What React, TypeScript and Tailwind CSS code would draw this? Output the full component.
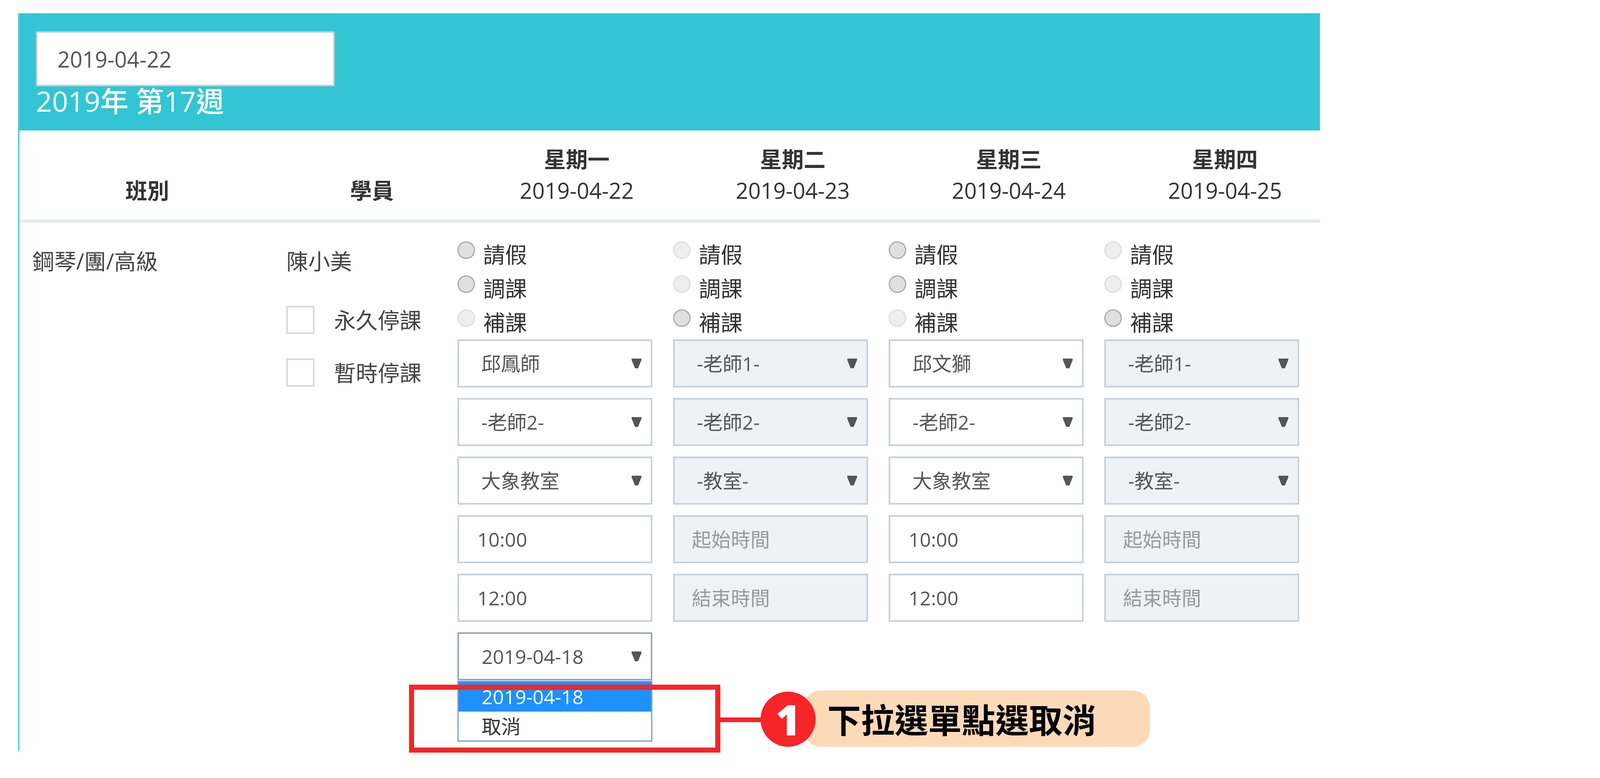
import React from "react";

type Col = {
  radios: boolean[];
  selects: string[];
  times: string[];
  disabled: boolean;
};

const cols: Col[] = [
  { radios: [true, true, false], selects: ["邱鳳師", "-老師2-", "大象教室"], times: ["10:00", "12:00"], disabled: false },
  { radios: [false, false, true], selects: ["-老師1-", "-老師2-", "-教室-"], times: ["起始時間", "結束時間"], disabled: true },
  { radios: [true, true, false], selects: ["邱文獅", "-老師2-", "大象教室"], times: ["10:00", "12:00"], disabled: false },
  { radios: [false, false, true], selects: ["-老師1-", "-老師2-", "-教室-"], times: ["起始時間", "結束時間"], disabled: true },
];

const days = [
  ["星期一", "2019-04-22"],
  ["星期二", "2019-04-23"],
  ["星期三", "2019-04-24"],
];

function Arrow() {
  return (
    <svg width="25" height="25" viewBox="0 0 25 25" className="shrink-0">
      <polygon points="0,0 25,0 25,4 16.5,25 8.5,25 0,4" fill="#555555" />
    </svg>
  );
}

function Radio({ dark }: { dark: boolean }) {
  return (
    <span
      className={
        dark
          ? "mt-[10px] h-[45px] w-[45px] shrink-0 rounded-full border-[3px] border-[#a9a9a9] bg-[#e0e0e0]"
          : "mt-[10px] h-[45px] w-[45px] shrink-0 rounded-full border-[3px] border-[#dddddd] bg-[#eeeeee]"
      }
    />
  );
}

function SelectBox({ text, disabled }: { text: string; disabled: boolean }) {
  return (
    <div
      className={
        disabled
          ? "flex h-[123px] w-[499px] items-center justify-between border-4 border-[#c6cedb] bg-[#eef1f6] pl-[57px] pr-[24px] text-[50px] text-[#555555]"
          : "flex h-[123px] w-[499px] items-center justify-between border-4 border-[#c6cedb] bg-white pl-[57px] pr-[24px] text-[50px] text-[#555555]"
      }
    >
      <span>{text}</span>
      <Arrow />
    </div>
  );
}

function TimeBox({ text, disabled }: { text: string; disabled: boolean }) {
  return (
    <div
      className={
        disabled
          ? "flex h-[123px] w-[499px] items-center border-4 border-[#c6cedb] bg-[#eef1f6] pl-[44px] text-[50px] text-[#999999]"
          : "flex h-[123px] w-[499px] items-center border-4 border-[#c6cedb] bg-white pl-[47px] text-[50px] text-[#555555]"
      }
    >
      {text}
    </div>
  );
}

export default function App() {
  return (
    <div className="relative h-[1992px] w-full overflow-hidden bg-white font-['Open_Sans','Noto_Sans_CJK_TC',sans-serif]">
      <div className="pl-[46px] pt-[34px]">
        <div className="h-[1888px] w-[3333px] border-l-4 border-[#5bcfdb]">
          {/* Header */}
          <div className="h-[300px] bg-[#33c5d3] pl-[42px] pt-[46px]">
            <div className="flex h-[141px] w-[765px] items-center border-4 border-[#c4ccd8] bg-white pl-[51px] text-[56px] text-[#555555]">
              2019-04-22
            </div>
            <div className="-mt-[2px] text-[72px] font-medium leading-[79px] text-white">2019年 第17週</div>
          </div>

          {/* Table head */}
          <div className="flex h-[236px] items-end border-b-8 border-[#e4e9ee] pb-[35px] text-[56px] leading-[80px] text-[#333333]">
            <div className="w-[654px] shrink-0 text-center font-bold">班別</div>
            <div className="w-[496px] shrink-0 text-center font-bold">學員</div>
            {days.map(([d, date]) => (
              <div key={d} className="w-[553px] shrink-0 text-center">
                <div className="font-bold">{d}</div>
                <div>{date}</div>
              </div>
            ))}
            <div className="w-[520px] shrink-0 pl-[34px] text-center">
              <div className="font-bold">星期四</div>
              <div>2019-04-25</div>
            </div>
          </div>

          {/* Body */}
          <div className="flex text-[56px] leading-[80px] text-[#444444]">
            <div className="w-[651px] shrink-0 pl-[33px] pt-[58px]">鋼琴/團/高級</div>
            <div className="w-[470px] shrink-0 pl-[32px] pt-[58px]">
              <div>陳小美</div>
              <div className="mt-[75px] flex h-[72px] items-center gap-[50px]">
                <span className="h-[72px] w-[72px] shrink-0 border-4 border-[#d8d8d8] bg-white" />
                <span className="leading-[72px]">永久停課</span>
              </div>
              <div className="mt-[63px] flex h-[72px] items-center gap-[50px]">
                <span className="h-[72px] w-[72px] shrink-0 border-4 border-[#d8d8d8] bg-white" />
                <span className="leading-[72px]">暫時停課</span>
              </div>
            </div>

            {cols.map((c, i) => (
              <div key={i} className="relative w-[552px] shrink-0 pt-[38px]">
                {["請假", "調課", "補課"].map((label, j) => (
                  <div key={label} className="flex h-[87px] items-start">
                    <Radio dark={c.radios[j]} />
                    <span className="ml-[21px] leading-[87px] text-[#333333]">{label}</span>
                  </div>
                ))}
                <div className="flex flex-col gap-[27px]">
                  {c.selects.map((s, k) => (
                    <SelectBox key={k} text={s} disabled={c.disabled} />
                  ))}
                  {c.times.map((t, k) => (
                    <TimeBox key={k} text={t} disabled={c.disabled} />
                  ))}
                  {i === 0 && (
                    <div className="relative">
                      <div className="flex h-[123px] w-[499px] items-center justify-between border-4 border-[#97a5be] bg-white pl-[58px] pr-[24px] text-[50px] text-[#555555]">
                        <span>2019-04-18</span>
                        <Arrow />
                      </div>
                      <div className="absolute left-0 top-[124px] z-10 h-[156px] w-[499px] border-[3px] border-[#7d9cd3] bg-white text-[50px] leading-[76px]">
                        <div className="h-[76px] bg-[#1e90ff] pl-[59px] text-white">2019-04-18</div>
                        <div className="h-[76px] pl-[59px] text-[#333333]">取消</div>
                      </div>
                    </div>
                  )}
                </div>
              </div>
            ))}
          </div>
        </div>
      </div>

      {/* Annotation overlay */}
      <div className="absolute left-[1047px] top-[1753px] z-20 h-[174px] w-[797px] border-[13px] border-[#f52528]" />
      <div className="absolute left-[1843px] top-[1837px] z-20 h-[12px] w-[110px] bg-[#f52528]" />
      <div className="absolute left-[2057px] top-[1768px] z-20 flex h-[144px] w-[887px] items-center rounded-[44px] bg-[#fddab7] pl-[61px]">
        <span className="text-[86px] font-bold leading-[100px] text-black font-['Noto_Sans_CJK_TC',sans-serif]">下拉選單點選取消</span>
      </div>
      <div className="absolute left-[1947px] top-[1771px] z-30 flex h-[141px] w-[141px] items-center justify-center rounded-full bg-[#f52528]">
        <span className="text-[108px] font-extrabold leading-none text-white font-['Open_Sans',sans-serif]">1</span>
      </div>
    </div>
  );
}
